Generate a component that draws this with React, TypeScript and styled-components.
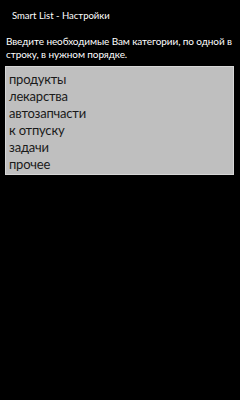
import { FC } from "react"
import styled, { createGlobalStyle } from "styled-components"

const GlobalStyle = createGlobalStyle`
  html, body {
    margin: 0;
    padding: 0;
    background: #000;
  }
  body {
    font-family: Lato, "Noto Sans", sans-serif;
    color: #fff;
  }
`

const categories = ["продукты", "лекарства", "автозапчасти", "к отпуску", "задачи", "прочее"]

const Page = styled.div`
  width: 240px;
  height: 400px;
  background: #000;
  display: flex;
  flex-direction: column;
`

const Title = styled.div`
  padding: 9px 0 0 12px;
  font-size: 9.5px;
  line-height: 13px;
  height: 22px;
`

const Hint = styled.p`
  margin: 4px 0 0 6px;
  font-size: 10px;
  line-height: 13px;
  letter-spacing: -0.1px;
  white-space: nowrap;
`

const ListBox = styled.div`
  margin: 5px 6px 0 5px;
  background: #bfbfbf;
  border: 1px solid #d6d6d6;
  padding: 4px 4px 1px 3px;
  display: flex;
  flex-direction: column;
`

const Item = styled.div`
  color: #1a1a1a;
  font-size: 13px;
  line-height: 17px;
  letter-spacing: -0.2px;
`

const App: FC = () => {
  return (
    <Page>
      <GlobalStyle />
      <Title>Smart List - Настройки</Title>
      <Hint>
        Введите необходимые Вам категории, по одной в
        <br />
        строку, в нужном порядке.
      </Hint>
      <ListBox>
        {categories.map((c) => (
          <Item key={c}>{c}</Item>
        ))}
      </ListBox>
    </Page>
  )
}

export default App
